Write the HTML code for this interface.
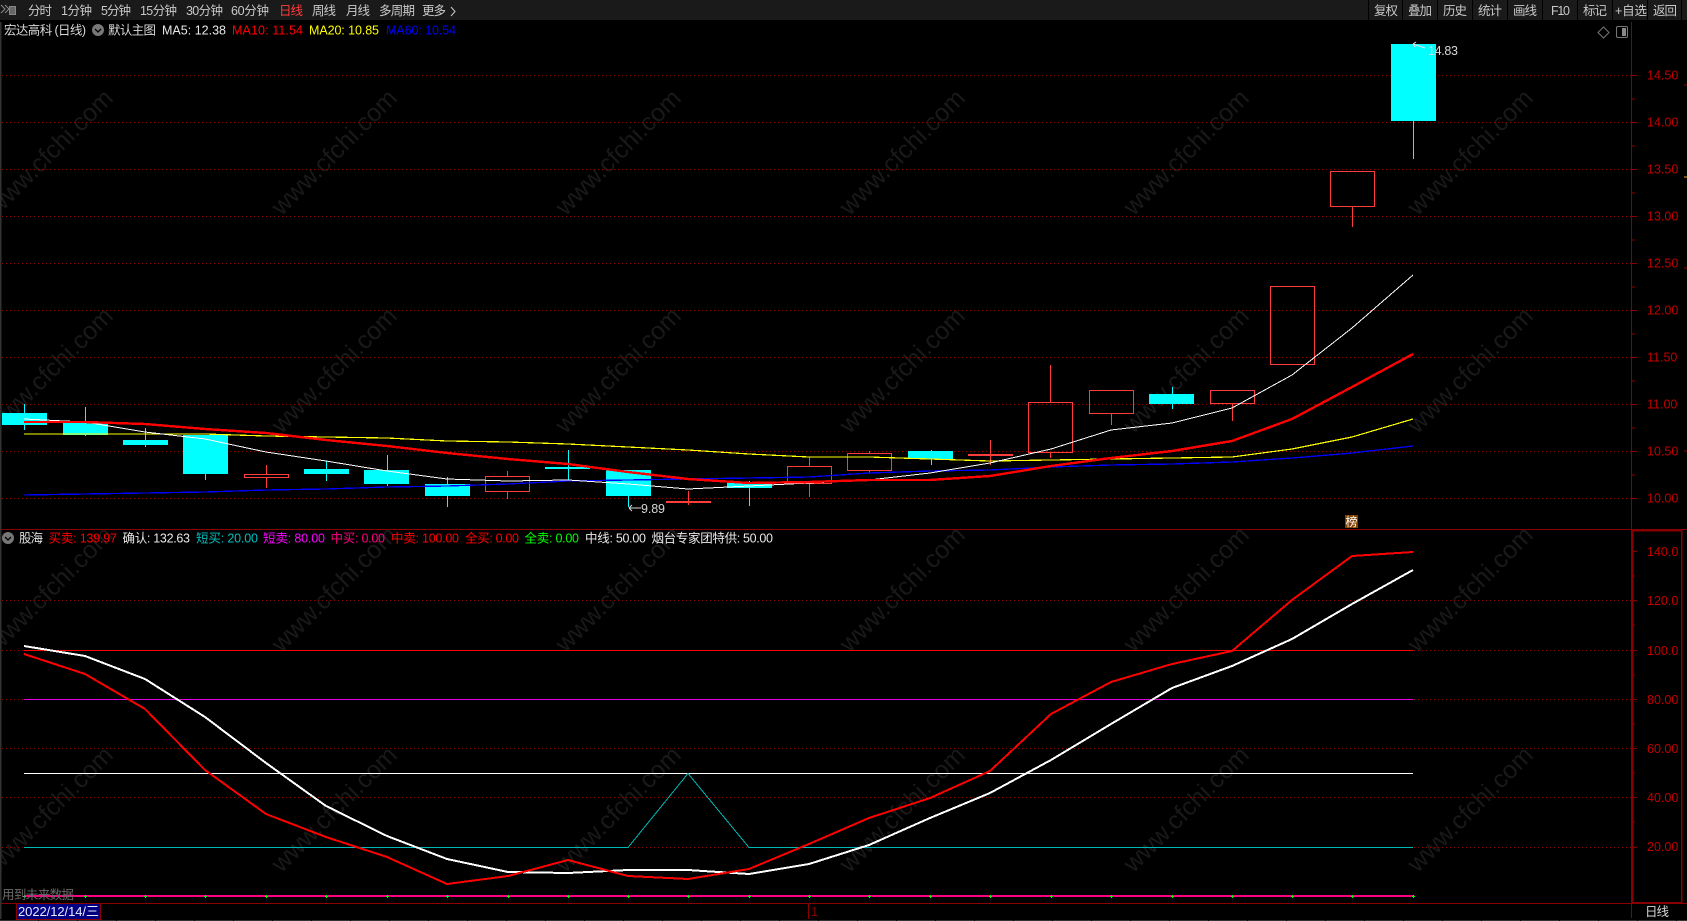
<!DOCTYPE html>
<html lang="zh"><head><meta charset="utf-8"><title>宏达高科 日线</title>
<style>
html,body{margin:0;padding:0;background:#000;width:1687px;height:921px;overflow:hidden}
svg{display:block;position:absolute;left:0;top:0}
text{font-family:"Liberation Sans","Noto Sans CJK SC",sans-serif;font-size:12.5px;dominant-baseline:auto}
.wm text{font-size:25px;fill:#191919}
.ax{fill:#c00000;font-size:13px}
.tb{fill:#c9c9c9;font-size:12.5px}
</style></head><body>
<svg width="1687" height="921" viewBox="0 0 1687 921">
<rect width="1687" height="921" fill="#000"/>
<!-- watermark -->
<g class="wm" text-anchor="middle">
<text transform="translate(56,158) rotate(-45)">www.cfchi.com</text>
<text transform="translate(340,158) rotate(-45)">www.cfchi.com</text>
<text transform="translate(624,158) rotate(-45)">www.cfchi.com</text>
<text transform="translate(908,158) rotate(-45)">www.cfchi.com</text>
<text transform="translate(1192,158) rotate(-45)">www.cfchi.com</text>
<text transform="translate(1476,158) rotate(-45)">www.cfchi.com</text>
<text transform="translate(56,376) rotate(-45)">www.cfchi.com</text>
<text transform="translate(340,376) rotate(-45)">www.cfchi.com</text>
<text transform="translate(624,376) rotate(-45)">www.cfchi.com</text>
<text transform="translate(908,376) rotate(-45)">www.cfchi.com</text>
<text transform="translate(1192,376) rotate(-45)">www.cfchi.com</text>
<text transform="translate(1476,376) rotate(-45)">www.cfchi.com</text>
<text transform="translate(56,595) rotate(-45)">www.cfchi.com</text>
<text transform="translate(340,595) rotate(-45)">www.cfchi.com</text>
<text transform="translate(624,595) rotate(-45)">www.cfchi.com</text>
<text transform="translate(908,595) rotate(-45)">www.cfchi.com</text>
<text transform="translate(1192,595) rotate(-45)">www.cfchi.com</text>
<text transform="translate(1476,595) rotate(-45)">www.cfchi.com</text>
<text transform="translate(56,815) rotate(-45)">www.cfchi.com</text>
<text transform="translate(340,815) rotate(-45)">www.cfchi.com</text>
<text transform="translate(624,815) rotate(-45)">www.cfchi.com</text>
<text transform="translate(908,815) rotate(-45)">www.cfchi.com</text>
<text transform="translate(1192,815) rotate(-45)">www.cfchi.com</text>
<text transform="translate(1476,815) rotate(-45)">www.cfchi.com</text>
</g>
<!-- dotted grid -->
<g stroke="#980000" stroke-width="1" stroke-dasharray="1 3" shape-rendering="crispEdges">
<path d="M2 75.5H1631M2 122.5H1631M2 169.5H1631M2 216.5H1631M2 263.5H1631M2 310.5H1631M2 357.5H1631M2 404.5H1631M2 451.5H1631M2 498.5H1631"/>
<path d="M2 600.5H1631M2 650.5H1631M2 699.5H1631M2 748.5H1631M2 797.5H1631M2 847.5H1631"/>
</g>
<!-- toolbar -->
<rect x="0" y="0" width="1687" height="20" fill="#1a1a1a"/>
<g stroke="#000" stroke-width="1" shape-rendering="crispEdges">
<path d="M1368.5 0V20M1402.5 0V20M1437.5 0V20M1472.5 0V20M1507.5 0V20M1542.5 0V20M1577.5 0V20M1612.5 0V20M1647.5 0V20M1681.5 0V20"/>
</g>
<g fill="none" stroke="#8a8a8a" stroke-width="1"><path d="M1 5l4 4-4 4M5 5l4 4-4 4"/></g>
<rect x="9.5" y="6.5" width="6" height="8" fill="#666" stroke="#888"/>
<g class="tb">
<text x="28" y="15" textLength="24">分时</text>
<text x="61" y="15" textLength="31">1分钟</text>
<text x="101" y="15" textLength="30">5分钟</text>
<text x="140" y="15" textLength="37">15分钟</text>
<text x="186" y="15" textLength="37">30分钟</text>
<text x="231" y="15" textLength="38">60分钟</text>
<text x="279" y="15" textLength="24" fill="#ff3c3c">日线</text>
<text x="312" y="15" textLength="24">周线</text>
<text x="346" y="15" textLength="24">月线</text>
<text x="379" y="15" textLength="36">多周期</text>
<text x="422" y="15" textLength="24">更多</text>
<path d="M451 7l4 4.5-4 4.5" fill="none" stroke="#c9c9c9"/>
<text x="1374" y="15" textLength="24">复权</text>
<text x="1408" y="15" textLength="24">叠加</text>
<text x="1443" y="15" textLength="24">历史</text>
<text x="1478" y="15" textLength="24">统计</text>
<text x="1513" y="15" textLength="24">画线</text>
<text x="1551" y="15" textLength="19">F10</text>
<text x="1583" y="15" textLength="24">标记</text>
<text x="1615" y="15" textLength="32">+自选</text>
<text x="1653" y="15" textLength="24">返回</text>
</g>
<!-- axis and panel frames -->
<g stroke="#8a0000" stroke-width="1" fill="none" shape-rendering="crispEdges">
<path d="M0 529.5H1687M1631.5 22V918M0 903.5H1687"/>
<rect x="1632.5" y="530.5" width="49" height="372" stroke-width="1.5"/>
<path d="M1632 75.5h5M1632 122.5h5M1632 169.5h5M1632 216.5h5M1632 263.5h5M1632 310.5h5M1632 357.5h5M1632 404.5h5M1632 451.5h5M1632 498.5h5"/>
<path d="M1632 99h3M1632 146h3M1632 193h3M1632 240h3M1632 287h3M1632 334h3M1632 381h3M1632 428h3M1632 475h3"/>
<path d="M1632 551.5h5M1632 600.5h5M1632 650.5h5M1632 699.5h5M1632 748.5h5M1632 797.5h5M1632 847.5h5"/>
<path d="M1632 576h3M1632 625h3M1632 675h3M1632 724h3M1632 773h3M1632 822h3"/>
<path d="M1684 85h3M1684 268h3M1684 451h3"/>
</g>
<path d="M1684 177h3" stroke="#e0a030" stroke-width="1"/>
<path d="M0.5 22V919" stroke="#333" stroke-width="2" shape-rendering="crispEdges"/>
<path d="M0 920.5H1687" stroke="#333" stroke-width="1" stroke-dasharray="38 1" shape-rendering="crispEdges"/>
<g class="ax">
<text x="1647" y="79.5">14.50</text>
<text x="1647" y="126.5">14.00</text>
<text x="1647" y="173.5">13.50</text>
<text x="1647" y="220.5">13.00</text>
<text x="1647" y="267.5">12.50</text>
<text x="1647" y="314.5">12.00</text>
<text x="1647" y="361.5">11.50</text>
<text x="1647" y="408.5">11.00</text>
<text x="1647" y="455.5">10.50</text>
<text x="1647" y="502.5">10.00</text>
<text x="1647" y="556">140.0</text>
<text x="1647" y="605">120.0</text>
<text x="1647" y="655">100.0</text>
<text x="1647" y="704">80.00</text>
<text x="1647" y="753">60.00</text>
<text x="1647" y="802">40.00</text>
<text x="1647" y="851">20.00</text>
</g>
<!-- top right icons -->
<path d="M1603.5 27l5.5 5.5-5.5 5.5-5.5-5.5z" fill="none" stroke="#777"/>
<rect x="1616.5" y="26.5" width="11" height="11" rx="1.5" fill="none" stroke="#777"/>
<rect x="1622" y="28" width="4" height="8" fill="#888"/>
<!-- legend upper -->
<text x="4" y="34.5" textLength="82" fill="#d8d8d8">宏达高科 (日线)</text>
<circle cx="98" cy="30" r="6" fill="#777"/>
<path d="M95 29l3 3 3-3" fill="none" stroke="#000" stroke-width="1.3"/>
<text x="108" y="34.5" textLength="48" fill="#d8d8d8">默认主图</text>
<text x="162" y="34.5" textLength="64" fill="#e8e8e8">MA5: 12.38</text>
<text x="232" y="34.5" textLength="71" fill="#ff0000">MA10: 11.54</text>
<text x="309" y="34.5" textLength="70" fill="#ffff00">MA20: 10.85</text>
<text x="386" y="34.5" textLength="70" fill="#0000ff">MA60: 10.54</text>
<!-- candles -->
<g shape-rendering="crispEdges">
<g fill="#00ffff" stroke="none">
<rect x="2" y="413" width="45" height="12"/>
<rect x="63" y="423" width="45" height="12"/>
<rect x="123" y="440" width="45" height="5"/>
<rect x="183" y="435" width="45" height="39"/>
<rect x="304" y="469" width="45" height="5"/>
<rect x="364" y="470" width="45" height="14"/>
<rect x="425" y="484" width="45" height="12"/>
<rect x="545" y="467" width="45" height="2"/>
<rect x="606" y="470" width="45" height="26"/>
<rect x="727" y="483" width="45" height="5"/>
<rect x="908" y="451" width="45" height="8"/>
<rect x="1149" y="394" width="45" height="10"/>
<rect x="1391" y="44" width="45" height="77"/>
</g>
<path stroke="#00ffff" stroke-width="1" fill="none" d="M24.5 404V430M85.5 407V436M145.5 428V447M205.5 474V480M326.5 461V481M387.5 455V486M447.5 477V507M568.5 450V480M628.5 496V507M749.5 481V506M931.5 450V465M1172.5 387V409M1413.5 121V159"/>
<g stroke="#ff3c3c" stroke-width="1" fill="none">
<rect x="244.5" y="474.5" width="44" height="3"/>
<rect x="485.5" y="476.5" width="44" height="15"/>
<rect x="787.5" y="466.5" width="44" height="17"/>
<rect x="847.5" y="453.5" width="44" height="17"/>
<rect x="1028.5" y="402.5" width="44" height="50"/>
<rect x="1089.5" y="390.5" width="44" height="23"/>
<rect x="1210.5" y="390.5" width="44" height="13"/>
<rect x="1270.5" y="286.5" width="44" height="78"/>
<rect x="1330.5" y="171.5" width="44" height="35"/>
<path d="M266.5 465V474M266.5 478V488M507.5 471V476M507.5 492V499M688.5 491V505M809.5 457V466M809.5 484V497M869.5 451V453M869.5 471V473M990.5 440V465M1050.5 365V402M1050.5 453V458M1111.5 414V425M1232.5 404V421M1352.5 207V227"/>
</g>
<rect x="666" y="501" width="45" height="2" fill="#ff3c3c"/>
<rect x="968" y="454" width="45" height="2" fill="#ff3c3c"/>
</g>
<!-- MAs -->
<g fill="none" shape-rendering="crispEdges">
<polyline stroke="#0000ff" stroke-width="1.3" points="24,495 85,494 145,493 205,492 266,490 326,489 387,487 447,486 508,484 568,481 628,480 688,479 749,478 809,477 869,473 930,471 990,470 1051,467 1111,465 1172,464 1232,462 1292,458 1352,453 1413,446"/>
<polyline stroke="#ffff00" stroke-width="1.2" points="24,434 85,434 145,434 205,434 266,436 326,437 387,438 447,441 508,442 568,444 628,447 688,450 749,454 809,457 869,457 930,459 990,461 1051,460 1111,459 1172,458 1232,457 1292,449 1352,437 1413,419"/>
<polyline stroke="#ffffff" stroke-width="1" points="24,419 85,422 145,432 205,439 266,452 326,461 387,471 447,479 508,481 568,480 628,484 688,489 749,486 809,483 869,480 930,473 990,463 1051,449 1111,430 1172,423 1232,408 1292,375 1352,328 1413,275"/>
<polyline stroke="#ff0000" stroke-width="2.4" points="24,422 85,422 145,424 205,429 266,433 326,440 387,446 447,453 508,459 568,464 628,472 688,479 749,483 809,482 869,480 930,480 990,476 1051,466 1111,458 1172,451 1232,441 1292,419 1352,387 1413,354"/>
</g>
<!-- hi/lo labels -->
<path d="M1413 44l12 4M1413 44l3-2M1413 44l2 3" stroke="#e8e8e8" fill="none"/>
<text x="1428" y="55" textLength="30" fill="#d8d8d8">14.83</text>
<path d="M629 508h12M629 508l3-3M629 508l3 3" stroke="#d8d8d8" fill="none"/>
<text x="641" y="513" textLength="24" fill="#d8d8d8">9.89</text>
<rect x="1345" y="515" width="13" height="13" fill="#804000"/>
<text x="1345.5" y="526" style="font-size:12px" fill="#fff">榜</text>
<!-- legend lower -->
<circle cx="8" cy="538" r="6" fill="#777"/>
<path d="M5 537l3 3 3-3" fill="none" stroke="#000" stroke-width="1.3"/>
<text x="19" y="542.5" textLength="24" fill="#e0e0e0">股海</text>
<text x="48.5" y="542.5" textLength="68.5" fill="#ff0000">买卖: 139.97</text>
<text x="122.5" y="542.5" textLength="67.5" fill="#e8e8e8">确认: 132.63</text>
<text x="196" y="542.5" textLength="62" fill="#00c0c0">短买: 20.00</text>
<text x="263" y="542.5" textLength="62" fill="#ff00ff">短卖: 80.00</text>
<text x="330.5" y="542.5" textLength="54.5" fill="#ff0080">中买: 0.00</text>
<text x="391" y="542.5" textLength="68" fill="#ff0000">中卖: 100.00</text>
<text x="465" y="542.5" textLength="54" fill="#ff0000">全买: 0.00</text>
<text x="524.5" y="542.5" textLength="54.5" fill="#00ff00">全卖: 0.00</text>
<text x="585" y="542.5" textLength="61" fill="#e8e8e8">中线: 50.00</text>
<text x="651.5" y="542.5" textLength="121.5" fill="#e8e8e8">烟台专家团特供: 50.00</text>
<!-- lower panel lines -->
<g shape-rendering="crispEdges" fill="none">
<path d="M24 650.5H1413" stroke="#ff0000"/>
<path d="M24 699.5H1413" stroke="#e000e0"/>
<path d="M24 773.5H1413" stroke="#ffffff"/>
<polyline stroke="#00b8b8" points="24,847.5 628,847.5 688,773.5 749,847.5 1413,847.5"/>
</g>
<g fill="none" shape-rendering="crispEdges" stroke-linejoin="round">
<polyline stroke="#ffffff" stroke-width="2" points="24,646 85,656 145,679 205,717 266,763 326,806 387,836 447,859 508,872 568,873 628,870 688,870 749,874 809,864 869,845 930,818 990,793 1051,760 1111,724 1172,688 1232,666 1292,639 1352,604 1413,570"/>
<polyline stroke="#ff0000" stroke-width="2" points="24,654 85,674 145,709 205,770 266,814 326,837 387,857 447,884 508,876 568,860 628,876 688,879 749,869 809,844 869,818 930,798 990,771 1051,714 1111,682 1172,664 1232,651 1292,600 1352,556 1413,552"/>
</g>
<path d="M24 896H1413" stroke="#ff0080" stroke-width="2" shape-rendering="crispEdges"/>
<path fill="none" stroke="#00ff00" stroke-width="1" shape-rendering="crispEdges" d="M23 896.5h3M24.5 895v3M84 896.5h3M85.5 895v3M144 896.5h3M145.5 895v3M204 896.5h3M205.5 895v3M265 896.5h3M266.5 895v3M325 896.5h3M326.5 895v3M386 896.5h3M387.5 895v3M446 896.5h3M447.5 895v3M507 896.5h3M508.5 895v3M567 896.5h3M568.5 895v3M627 896.5h3M628.5 895v3M687 896.5h3M688.5 895v3M748 896.5h3M749.5 895v3M808 896.5h3M809.5 895v3M868 896.5h3M869.5 895v3M929 896.5h3M930.5 895v3M989 896.5h3M990.5 895v3M1050 896.5h3M1051.5 895v3M1110 896.5h3M1111.5 895v3M1171 896.5h3M1172.5 895v3M1231 896.5h3M1232.5 895v3M1291 896.5h3M1292.5 895v3M1351 896.5h3M1352.5 895v3M1412 896.5h3M1413.5 895v3"/>
<text x="2" y="899" textLength="72" fill="#6a6a6a">用到未来数据</text>
<!-- status bar -->
<rect x="16.5" y="903.5" width="84" height="16" fill="#000080" stroke="#8a0000"/>
<text x="18" y="916" textLength="81" fill="#e8e8ff" style="font-size:13px">2022/12/14/三</text>
<text x="811" y="916" fill="#8a0000" style="font-size:13px">1</text>
<path d="M808.5 904V919" stroke="#8a0000" shape-rendering="crispEdges"/>
<text x="1645" y="916" textLength="24" fill="#d8d8d8">日线</text>
</svg>
</body></html>
